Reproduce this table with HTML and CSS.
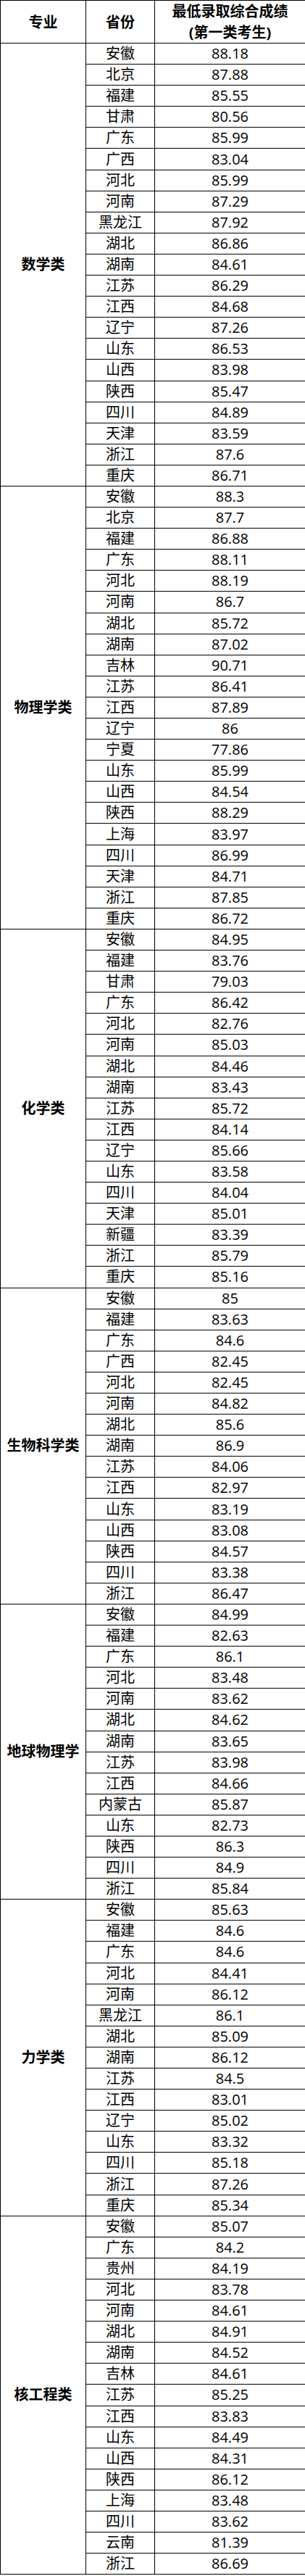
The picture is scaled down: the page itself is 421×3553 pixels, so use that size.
FILE: index.html
```html
<!DOCTYPE html>
<html lang="zh-CN">
<head>
<meta charset="utf-8">
<title>最低录取综合成绩</title>
<link rel="stylesheet" href="styles.css">
</head>
<body>
<table class="score-table">
<colgroup><col class="c-major"><col class="c-prov"><col class="c-score"></colgroup>
<thead>
<tr class="head-row"><th>专业</th><th>省份</th><th>最低录取综合成绩<br>(第一类考生)</th></tr>
</thead>
<tbody>
<tr><td class="major" rowspan="21">数学类</td><td>安徽</td><td>88.18</td></tr>
<tr><td>北京</td><td>87.88</td></tr>
<tr><td>福建</td><td>85.55</td></tr>
<tr><td>甘肃</td><td>80.56</td></tr>
<tr><td>广东</td><td>85.99</td></tr>
<tr><td>广西</td><td>83.04</td></tr>
<tr><td>河北</td><td>85.99</td></tr>
<tr><td>河南</td><td>87.29</td></tr>
<tr><td>黑龙江</td><td>87.92</td></tr>
<tr><td>湖北</td><td>86.86</td></tr>
<tr><td>湖南</td><td>84.61</td></tr>
<tr><td>江苏</td><td>86.29</td></tr>
<tr><td>江西</td><td>84.68</td></tr>
<tr><td>辽宁</td><td>87.26</td></tr>
<tr><td>山东</td><td>86.53</td></tr>
<tr><td>山西</td><td>83.98</td></tr>
<tr><td>陕西</td><td>85.47</td></tr>
<tr><td>四川</td><td>84.89</td></tr>
<tr><td>天津</td><td>83.59</td></tr>
<tr><td>浙江</td><td>87.6</td></tr>
<tr><td>重庆</td><td>86.71</td></tr>

<tr><td class="major" rowspan="21">物理学类</td><td>安徽</td><td>88.3</td></tr>
<tr><td>北京</td><td>87.7</td></tr>
<tr><td>福建</td><td>86.88</td></tr>
<tr><td>广东</td><td>88.11</td></tr>
<tr><td>河北</td><td>88.19</td></tr>
<tr><td>河南</td><td>86.7</td></tr>
<tr><td>湖北</td><td>85.72</td></tr>
<tr><td>湖南</td><td>87.02</td></tr>
<tr><td>吉林</td><td>90.71</td></tr>
<tr><td>江苏</td><td>86.41</td></tr>
<tr><td>江西</td><td>87.89</td></tr>
<tr><td>辽宁</td><td>86</td></tr>
<tr><td>宁夏</td><td>77.86</td></tr>
<tr><td>山东</td><td>85.99</td></tr>
<tr><td>山西</td><td>84.54</td></tr>
<tr><td>陕西</td><td>88.29</td></tr>
<tr><td>上海</td><td>83.97</td></tr>
<tr><td>四川</td><td>86.99</td></tr>
<tr><td>天津</td><td>84.71</td></tr>
<tr><td>浙江</td><td>87.85</td></tr>
<tr><td>重庆</td><td>86.72</td></tr>

<tr><td class="major" rowspan="17">化学类</td><td>安徽</td><td>84.95</td></tr>
<tr><td>福建</td><td>83.76</td></tr>
<tr><td>甘肃</td><td>79.03</td></tr>
<tr><td>广东</td><td>86.42</td></tr>
<tr><td>河北</td><td>82.76</td></tr>
<tr><td>河南</td><td>85.03</td></tr>
<tr><td>湖北</td><td>84.46</td></tr>
<tr><td>湖南</td><td>83.43</td></tr>
<tr><td>江苏</td><td>85.72</td></tr>
<tr><td>江西</td><td>84.14</td></tr>
<tr><td>辽宁</td><td>85.66</td></tr>
<tr><td>山东</td><td>83.58</td></tr>
<tr><td>四川</td><td>84.04</td></tr>
<tr><td>天津</td><td>85.01</td></tr>
<tr><td>新疆</td><td>83.39</td></tr>
<tr><td>浙江</td><td>85.79</td></tr>
<tr><td>重庆</td><td>85.16</td></tr>

<tr><td class="major" rowspan="15">生物科学类</td><td>安徽</td><td>85</td></tr>
<tr><td>福建</td><td>83.63</td></tr>
<tr><td>广东</td><td>84.6</td></tr>
<tr><td>广西</td><td>82.45</td></tr>
<tr><td>河北</td><td>82.45</td></tr>
<tr><td>河南</td><td>84.82</td></tr>
<tr><td>湖北</td><td>85.6</td></tr>
<tr><td>湖南</td><td>86.9</td></tr>
<tr><td>江苏</td><td>84.06</td></tr>
<tr><td>江西</td><td>82.97</td></tr>
<tr><td>山东</td><td>83.19</td></tr>
<tr><td>山西</td><td>83.08</td></tr>
<tr><td>陕西</td><td>84.57</td></tr>
<tr><td>四川</td><td>83.38</td></tr>
<tr><td>浙江</td><td>86.47</td></tr>

<tr><td class="major" rowspan="14">地球物理学</td><td>安徽</td><td>84.99</td></tr>
<tr><td>福建</td><td>82.63</td></tr>
<tr><td>广东</td><td>86.1</td></tr>
<tr><td>河北</td><td>83.48</td></tr>
<tr><td>河南</td><td>83.62</td></tr>
<tr><td>湖北</td><td>84.62</td></tr>
<tr><td>湖南</td><td>83.65</td></tr>
<tr><td>江苏</td><td>83.98</td></tr>
<tr><td>江西</td><td>84.66</td></tr>
<tr><td>内蒙古</td><td>85.87</td></tr>
<tr><td>山东</td><td>82.73</td></tr>
<tr><td>陕西</td><td>86.3</td></tr>
<tr><td>四川</td><td>84.9</td></tr>
<tr><td>浙江</td><td>85.84</td></tr>

<tr><td class="major" rowspan="15">力学类</td><td>安徽</td><td>85.63</td></tr>
<tr><td>福建</td><td>84.6</td></tr>
<tr><td>广东</td><td>84.6</td></tr>
<tr><td>河北</td><td>84.41</td></tr>
<tr><td>河南</td><td>86.12</td></tr>
<tr><td>黑龙江</td><td>86.1</td></tr>
<tr><td>湖北</td><td>85.09</td></tr>
<tr><td>湖南</td><td>86.12</td></tr>
<tr><td>江苏</td><td>84.5</td></tr>
<tr><td>江西</td><td>83.01</td></tr>
<tr><td>辽宁</td><td>85.02</td></tr>
<tr><td>山东</td><td>83.32</td></tr>
<tr><td>四川</td><td>85.18</td></tr>
<tr><td>浙江</td><td>87.26</td></tr>
<tr><td>重庆</td><td>85.34</td></tr>

<tr><td class="major" rowspan="17">核工程类</td><td>安徽</td><td>85.07</td></tr>
<tr><td>广东</td><td>84.2</td></tr>
<tr><td>贵州</td><td>84.19</td></tr>
<tr><td>河北</td><td>83.78</td></tr>
<tr><td>河南</td><td>84.61</td></tr>
<tr><td>湖北</td><td>84.91</td></tr>
<tr><td>湖南</td><td>84.52</td></tr>
<tr><td>吉林</td><td>84.61</td></tr>
<tr><td>江苏</td><td>85.25</td></tr>
<tr><td>江西</td><td>83.83</td></tr>
<tr><td>山东</td><td>84.49</td></tr>
<tr><td>山西</td><td>84.31</td></tr>
<tr><td>陕西</td><td>86.12</td></tr>
<tr><td>上海</td><td>83.48</td></tr>
<tr><td>四川</td><td>83.62</td></tr>
<tr><td>云南</td><td>81.39</td></tr>
<tr><td>浙江</td><td>86.69</td></tr>
</tbody>
</table>
</body>
</html>
```
FILE: styles.css
```css
html, body {
  margin: 0;
  padding: 0;
  background: #fff;
}
body {
  font-family: "Open Sans", "Noto Sans CJK SC", sans-serif;
  color: #000;
}
.score-table {
  border-collapse: collapse;
  table-layout: fixed;
  width: 421px;
}
.c-major { width: 118px; }
.c-prov { width: 95px; }
.c-score { width: 208px; }
.score-table th,
.score-table td {
  border: 1px solid #000;
  padding: 0;
  text-align: center;
  vertical-align: middle;
  font-size: 20px;
  line-height: 24px;
}
.score-table th {
  font-weight: bold;
  line-height: 29px;
}
.head-row {
  height: 58px;
}
.score-table tbody tr {
  height: 29.1px;
}
.score-table td.major {
  font-weight: bold;
}
```
